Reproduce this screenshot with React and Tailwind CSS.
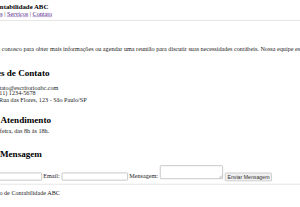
import React from "react";

export default function App() {
  return (
    <div className="w-[300px] h-[207px] overflow-hidden bg-white">
      <div className="ml-[-42px] w-[1000px] origin-top-left scale-[0.3625] font-['Liberation_Serif',serif] text-[17.05px] text-[#222]">
        <header className="pt-[8.3px] pb-[6.9px] border-b-[2.76px] border-[#dcdcdc]">
          <h1 className="ml-[-15.4px] text-[18.72px] leading-[22px] font-bold text-black whitespace-nowrap">
            Escritório de Contabilidade ABC
          </h1>
          <nav className="mt-[1.4px] leading-[16.55px] whitespace-nowrap">
            <a href="#" className="text-[#551a8b] underline">Início</a> |{" "}
            <a href="#" className="text-[#551a8b] underline">Sobre Nós</a> |{" "}
            <a href="#" className="text-[#551a8b] underline">Serviços</a> |{" "}
            <a href="#" className="text-[#551a8b] underline">Contato</a>
          </nav>
        </header>

        <main>
          <p className="mt-[71.7px] leading-[16.55px] whitespace-nowrap">
            Entre em contato conosco para obter mais informações ou agendar uma reunião para discutir suas necessidades contábeis. Nossa equipe está pronta para ajudar!
          </p>

          <h2 className="mt-[45.5px] ml-[-5.5px] text-[25.1px] leading-[24.8px] font-bold text-black whitespace-nowrap">
            Informações de Contato
          </h2>
          <ul className="mt-[17.9px] pl-[40px] leading-[16.55px] whitespace-nowrap">
            <li>Email: contato@escritorioabc.com</li>
            <li>Telefone: (11) 1234-5678</li>
            <li>Endereço: Rua das Flores, 123 - São Paulo/SP</li>
          </ul>

          <h2 className="mt-[34.5px] ml-[-5.5px] text-[25.1px] leading-[24.8px] font-bold text-black whitespace-nowrap">
            Horário de Atendimento
          </h2>
          <p className="mt-[12.4px] leading-[16.55px] whitespace-nowrap">
            Segunda a sexta-feira, das 8h às 18h.
          </p>

          <h2 className="mt-[42.8px] ml-[-5.5px] text-[25.1px] leading-[24.8px] font-bold text-black whitespace-nowrap">
            Envie uma Mensagem
          </h2>
          <form className="mt-[16.55px] flex items-start h-[44.7px] leading-[16.55px]">
            <label className="shrink-0 w-[48.8px] mt-[23.4px] whitespace-nowrap">Nome:</label>
            <input type="text" className="shrink-0 w-[182.9px] h-[22px] mt-[20.7px] border-2 border-[#b4b4b4] rounded-[3px] bg-white" />
            <label className="shrink-0 w-[54.3px] pl-[3.6px] mt-[23.4px] whitespace-nowrap">Email:</label>
            <input type="email" className="shrink-0 w-[182.9px] h-[22px] mt-[20.7px] border-2 border-[#b4b4b4] rounded-[3px] bg-white" />
            <label className="shrink-0 w-[88.3px] pl-[3.6px] mt-[23.4px] whitespace-nowrap">Mensagem:</label>
            <div className="relative shrink-0 w-[173.8px] h-[37.5px] mt-[0.5px]">
              <textarea className="block w-full h-full resize-none border-2 border-[#b4b4b4] rounded-[3px] bg-white" />
              <svg className="absolute right-[3px] bottom-[3px]" width="8" height="8" viewBox="0 0 8 8">
                <path d="M8 1 L1 8 M8 4.5 L4.5 8" stroke="#777" strokeWidth="1.2" />
              </svg>
            </div>
            <button type="button" className="shrink-0 ml-[5.5px] w-[129.7px] h-[24px] mt-[20.7px] border-2 border-[#c4c4c4] rounded-[3px] bg-[#efefef] font-['Liberation_Sans',sans-serif] text-[14.4px] leading-[16px] text-[#333] whitespace-nowrap flex items-center justify-center">
              Enviar Mensagem
            </button>
          </form>
        </main>

        <div className="mt-[6.3px] border-t-[2.76px] border-[#dcdcdc]" />
        <footer className="mt-[16.55px] leading-[16.55px] whitespace-nowrap">
          © 2024 Escritório de Contabilidade ABC
        </footer>
      </div>
    </div>
  );
}
